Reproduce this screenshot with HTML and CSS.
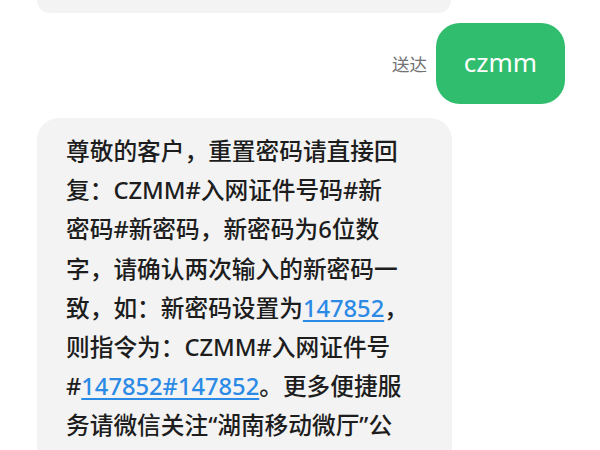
FILE: index.html
```html
<!DOCTYPE html>
<html lang="zh-CN">
<head>
<meta charset="utf-8">
<title>短信</title>
<link rel="stylesheet" href="styles.css">
</head>
<body>
<div class="chat">
  <div class="bubble-prev"></div>
  <div class="row-out">
    <span class="status">送达</span>
    <div class="bubble-out">czmm</div>
  </div>
  <div class="bubble-in">
    <p class="msg">尊敬的客户，重置密码请直接回<br>复：CZMM#入网证件号码#新<br>密码#新密码，新密码为6位数<br>字，请确认两次输入的新密码一<br>致，如：新密码设置为<a class="num" href="#">147852</a>，<br>则指令为：CZMM#入网证件号<br>#<a class="num" href="#">147852#147852</a>。更多便捷服<br>务请微信关注“湖南移动微厅”公</p>
  </div>
</div>
</body>
</html>
```

FILE: styles.css
```css
html, body {
  margin: 0;
  padding: 0;
  background: #ffffff;
}
body {
  width: 600px;
  height: 450px;
  overflow: hidden;
  font-family: "Noto Sans CJK SC", "Noto Sans", sans-serif;
}
.chat {
  display: flex;
  flex-direction: column;
  padding: 0 35px 0 37px;
}
.bubble-prev {
  width: 414px;
  height: 13px;
  background: #f3f3f3;
  border-radius: 0 0 22px 22px;
}
.row-out {
  margin-top: 10px;
  display: flex;
  justify-content: flex-end;
  align-items: center;
  gap: 9px;
}
.status {
  font-size: 17.5px;
  color: #727272;
  line-height: 1;
}
.bubble-out {
  width: 129px;
  height: 81px;
  border-radius: 24px;
  background: #30bd6e;
  color: #ffffff;
  font-family: "Noto Sans", sans-serif;
  font-size: 26px;
  display: flex;
  align-items: center;
  justify-content: center;
  padding-bottom: 4px;
  box-sizing: border-box;
}
.bubble-in {
  margin-top: 14px;
  width: 415px;
  min-height: 340px;
  background: #f3f3f3;
  border-radius: 22px;
  padding: 14px 10px 30px 29px;
  box-sizing: border-box;
}
.msg {
  margin: 0;
  font-family: "Noto Sans", "Noto Sans CJK SC", sans-serif;
  font-size: 23.7px;
  font-weight: 500;
  line-height: 39.2px;
  color: #1d1d1d;
  white-space: nowrap;
}
.num {
  color: #2b8ae6;
  text-decoration: underline;
  text-decoration-thickness: 1.5px;
  text-underline-offset: 3px;
}
```
